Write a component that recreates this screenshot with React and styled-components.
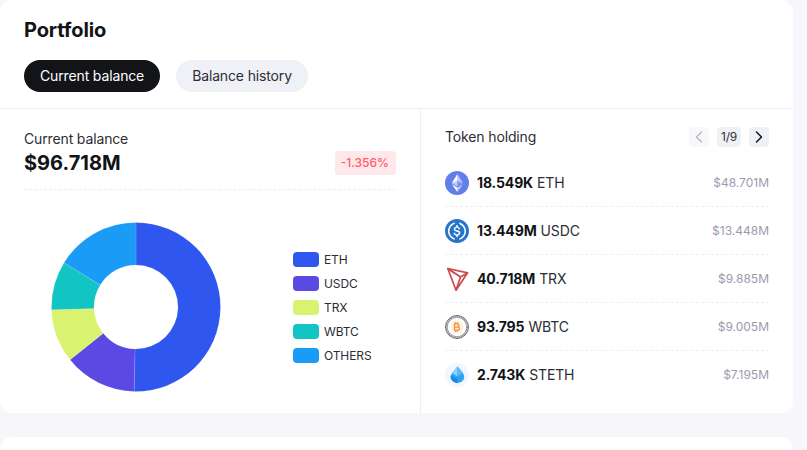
import React from "react";
import styled, { createGlobalStyle } from "styled-components";
import { ChevronLeft, ChevronRight } from "lucide-react";
import { FaBitcoinSign } from "react-icons/fa6";

const Global = createGlobalStyle`
  html, body { margin: 0; padding: 0; height: 450px; overflow: hidden; background: #f6f6fb; }
  body { font-family: Inter, "Liberation Sans", sans-serif; color: #121417; }
  * { box-sizing: border-box; }
`;

const Page = styled.div`
  width: 793px;
  display: flex;
  flex-direction: column;
  gap: 24px;
`;
const Card = styled.section`
  background: #fff;
  border-radius: 12px;
`;
const NextCard = styled(Card)`
  height: 13px;
  border-radius: 12px 12px 0 0;
`;
const Header = styled.header`
  height: 109px;
  padding: 18px 24px 0;
  border-bottom: 1px solid #eeeef1;
`;
const Title = styled.h1`
  margin: 0 0 17px;
  font-size: 20px;
  line-height: 25px;
  font-weight: 700;
  letter-spacing: -0.1px;
`;
const Tabs = styled.div`
  display: flex;
  gap: 16px;
`;
const Tab = styled.button`
  height: 32px;
  padding: 0 16px;
  border: 0;
  border-radius: 16px;
  font: 400 14px/32px Inter, sans-serif;
  letter-spacing: -0.14px;
  background: ${(p) => (p.$active ? "#121417" : "#f0f1f7")};
  color: ${(p) => (p.$active ? "#fff" : "#2b2e35")};
`;
const Columns = styled.div`
  display: grid;
  grid-template-columns: 421px 372px;
  height: 304px;
`;
const Left = styled.div`
  border-right: 1px solid #eeeef1;
  padding: 21px 24px 0;
`;
const Summary = styled.div`
  display: flex;
  justify-content: space-between;
  align-items: flex-end;
  height: 60px;
  padding-bottom: 14px;
  border-bottom: 1px dashed #eeeef1;
`;
const Label = styled.div`
  font-size: 14px;
  line-height: 18px;
  letter-spacing: -0.14px;
  color: #2b2e35;
`;
const Total = styled.div`
  font-size: 20px;
  line-height: 24px;
  font-weight: 700;
  margin-top: 3px;
`;
const Badge = styled.span`
  height: 24px;
  padding: 0 7px 0 6px;
  border-radius: 4px;
  background: #ffe8ea;
  color: #ff5c68;
  font-size: 12px;
  font-weight: 500;
  line-height: 24px;
`;
const ChartRow = styled.div`
  display: flex;
  align-items: center;
  padding: 32px 0 0 26.6px;
`;
const Legend = styled.ul`
  list-style: none;
  margin: 0 0 0 72.4px;
  padding: 0;
  display: flex;
  flex-direction: column;
  gap: 8px;
`;
const LegendItem = styled.li`
  display: flex;
  align-items: center;
  gap: 5px;
  height: 16px;
  font-size: 12px;
  letter-spacing: -0.1px;
  color: #2b2e35;
`;
const Swatch = styled.i`
  width: 26px;
  height: 15px;
  border-radius: 4px;
  background: ${(p) => p.$color};
`;
const Right = styled.div`
  padding: 18px 24px 0;
`;
const HoldingHead = styled.div`
  display: flex;
  align-items: center;
  justify-content: space-between;
  height: 20px;
  margin-bottom: 12px;
`;
const Pager = styled.div`
  display: flex;
  gap: 8px;
  align-items: center;
`;
const PageButton = styled.span`
  width: 20px;
  height: 20px;
  border-radius: 4px;
  display: flex;
  align-items: center;
  justify-content: center;
  background: ${(p) => (p.$disabled ? "#f8f8fa" : "#f0f1f7")};
  color: ${(p) => (p.$disabled ? "#b4b6bb" : "#121417")};
`;
const PageCount = styled.span`
  width: 24px;
  height: 20px;
  border-radius: 4px;
  background: #f0f1f7;
  font-size: 12px;
  line-height: 20px;
  letter-spacing: -0.2px;
  text-align: center;
  color: #2b2e35;
`;
const Row = styled.div`
  display: flex;
  align-items: center;
  height: 48px;
  border-bottom: 1px dashed ${(p) => (p.$last ? "transparent" : "#eeeef1")};
`;
const TokenIcon = styled.span`
  width: 24px;
  height: 24px;
  flex: none;
  margin-right: 8px;
  display: flex;
  svg { display: block; }
`;
const Amount = styled.span`
  font-size: 14px;
  font-weight: 700;
  letter-spacing: -0.14px;
`;
const Symbol = styled.span`
  font-size: 14px;
  letter-spacing: -0.14px;
  color: #2b2e35;
  margin-left: 4px;
`;
const Value = styled.span`
  margin-left: auto;
  font-size: 12px;
  color: #9d9aaf;
`;

const Eth = () => (
  <svg width="24" height="24" viewBox="0 0 32 32">
    <circle cx="16" cy="16" r="16" fill="#627EEA" />
    <g fill="#fff">
      <path fillOpacity=".602" d="M16.498 4v8.87l7.497 3.35z" />
      <path d="M16.498 4L9 16.22l7.498-3.35z" />
      <path fillOpacity=".602" d="M16.498 21.968v6.027L24 17.616z" />
      <path d="M16.498 27.995v-6.028L9 17.616z" />
      <path fillOpacity=".2" d="M16.498 20.573l7.497-4.353-7.497-3.348z" />
      <path fillOpacity=".602" d="M9 16.22l7.498 4.353v-7.701z" />
    </g>
  </svg>
);
const Usdc = () => (
  <svg width="24" height="24" viewBox="0 0 2000 2000">
    <path d="M1000 2000c554.17 0 1000-445.83 1000-1000S1554.17 0 1000 0 0 445.83 0 1000s445.83 1000 1000 1000z" fill="#2775ca" />
    <path d="M1275 1158.33c0-145.83-87.5-195.83-262.5-216.66-125-16.67-150-50-150-108.34s41.67-95.83 125-95.83c75 0 116.67 25 137.5 87.5 4.17 12.5 16.67 20.83 29.17 20.83h66.66c16.67 0 29.17-12.5 29.17-29.16v-4.17c-16.67-91.67-91.67-162.5-187.5-170.83v-100c0-16.67-12.5-29.17-33.33-33.34h-62.5c-16.67 0-29.17 12.5-33.34 33.34v95.83c-125 16.67-204.16 100-204.16 204.17 0 137.5 83.33 191.66 258.33 212.5 116.67 20.83 154.17 45.83 154.17 112.5s-58.34 112.5-137.5 112.5c-108.34 0-145.84-45.84-158.34-108.34-4.16-16.66-16.66-25-29.16-25h-70.84c-16.66 0-29.16 12.5-29.16 29.17v4.17c16.66 104.16 83.33 179.16 220.83 200v100c0 16.66 12.5 29.16 33.33 33.33h62.5c16.67 0 29.17-12.5 33.34-33.33v-100c125-20.84 208.33-108.34 208.33-220.84z" fill="#fff" />
    <path d="M787.5 1595.83c-325-116.66-491.67-479.16-370.83-800 62.5-175 200-308.33 370.83-370.83 16.67-8.33 25-20.83 25-41.67V325c0-16.67-8.33-29.17-25-33.33-4.17 0-12.5 0-16.67 4.16-395.83 125-612.5 545.84-487.5 941.67 75 233.33 254.17 412.5 487.5 487.5 16.67 8.33 33.34 0 37.5-16.67 4.17-4.16 4.17-8.33 4.17-16.66v-58.34c0-12.5-12.5-29.16-25-37.5zM1229.17 295.83c-16.67-8.33-33.34 0-37.5 16.67-4.17 4.17-4.17 8.33-4.17 16.67v58.33c0 16.67 12.5 33.33 25 41.67 325 116.66 491.67 479.16 370.83 800-62.5 175-200 308.33-370.83 370.83-16.67 8.33-25 20.83-25 41.67V1700c0 16.67 8.33 29.17 25 33.33 4.17 0 12.5 0 16.67-4.16 395.83-125 612.5-545.84 487.5-941.67-75-237.5-258.34-416.67-487.5-491.67z" fill="#fff" />
  </svg>
);
const Trx = () => (
  <svg width="24" height="24" viewBox="0 0 24 24" fill="none" stroke="#cc4a4a" strokeWidth="1.7" strokeLinejoin="round">
    <path d="M2.8 1.5 L22.6 5.8 L11 23.2 Z" />
    <path d="M2.8 1.5 L15.5 10 L22.6 5.8 M15.5 10 L11 23.2" />
    <path d="M2.8 1.5 L9 6.5" strokeWidth="1" />
  </svg>
);
const Wbtc = () => (
  <svg width="24" height="24" viewBox="0 0 24 24">
    <circle cx="12" cy="12" r="11.5" fill="#fff" stroke="#5a5564" strokeWidth=".9" />
    <circle cx="12" cy="12" r="10" fill="none" stroke="#8f8b99" strokeWidth="1.8" strokeDasharray="1.6 0.5" />
    <circle cx="12" cy="12" r="6.6" fill="#fdf1e0" />
    <FaBitcoinSign x="7" y="7" size="10" color="#f09242" />
  </svg>
);
const Steth = () => (
  <svg width="24" height="24" viewBox="0 0 24 24">
    <circle cx="12" cy="12" r="12" fill="#f1f7fc" />
    <path d="M12.5 3.6 L18 10 Q21 15.5 16.5 18.8 Q12.5 21 8.5 18.8 Q4 15.5 7 10 Z" fill="#2aa3f5" />
    <path d="M12.5 3.6 L7 10 L12.5 13.5 Z" fill="#8fd2fb" />
    <path d="M12.5 13.5 L18 10 L12.5 3.6 Z" fill="#56bcf9" />
    <path d="M5.6 12.5 L12.5 16.6 L12.5 20.2 Q10.3 20.2 8.5 18.8 Q5 16 5.6 12.5 Z" fill="#1b88e6" />
  </svg>
);

const SLICES = [
  { label: "ETH", color: "#2f57ef", share: 50.35 },
  { label: "USDC", color: "#5b49e3", share: 13.9 },
  { label: "TRX", color: "#d9f371", share: 10.22 },
  { label: "WBTC", color: "#13c4c4", share: 9.31 },
  { label: "OTHERS", color: "#1a9bf5", share: 16.22 },
];

const TOKENS = [
  { amount: "18.549K", symbol: "ETH", value: "$48.701M", Icon: Eth },
  { amount: "13.449M", symbol: "USDC", value: "$13.448M", Icon: Usdc },
  { amount: "40.718M", symbol: "TRX", value: "$9.885M", Icon: Trx },
  { amount: "93.795", symbol: "WBTC", value: "$9.005M", Icon: Wbtc },
  { amount: "2.743K", symbol: "STETH", value: "$7.195M", Icon: Steth },
];

function arc(start, end, R, r, c) {
  const pt = (rad, pct) => {
    const a = (pct / 100) * 2 * Math.PI;
    return `${(c + rad * Math.sin(a)).toFixed(3)} ${(c - rad * Math.cos(a)).toFixed(3)}`;
  };
  const large = end - start > 50 ? 1 : 0;
  return `M${pt(R, start)} A${R} ${R} 0 ${large} 1 ${pt(R, end)} L${pt(r, end)} A${r} ${r} 0 ${large} 0 ${pt(r, start)} Z`;
}

const Donut = () => {
  let at = 0;
  return (
    <svg width="170" height="170" viewBox="0 0 170 170">
      {SLICES.map((s) => {
        const d = arc(at, at + s.share, 84.5, 42, 85);
        at += s.share;
        return <path key={s.label} d={d} fill={s.color} stroke="#fff" strokeOpacity=".4" strokeWidth=".3" />;
      })}
    </svg>
  );
};

export default function App() {
  return (
    <Page>
      <Global />
      <Card>
        <Header>
          <Title>Portfolio</Title>
          <Tabs>
            <Tab $active>Current balance</Tab>
            <Tab>Balance history</Tab>
          </Tabs>
        </Header>
        <Columns>
          <Left>
            <Summary>
              <div>
                <Label>Current balance</Label>
                <Total>$96.718M</Total>
              </div>
              <Badge>-1.356%</Badge>
            </Summary>
            <ChartRow>
              <Donut />
              <Legend>
                {SLICES.map((s) => (
                  <LegendItem key={s.label}>
                    <Swatch $color={s.color} />
                    {s.label}
                  </LegendItem>
                ))}
              </Legend>
            </ChartRow>
          </Left>
          <Right>
            <HoldingHead>
              <Label>Token holding</Label>
              <Pager>
                <PageButton $disabled><ChevronLeft size={20} strokeWidth={1.5} /></PageButton>
                <PageCount>1/9</PageCount>
                <PageButton><ChevronRight size={20} strokeWidth={1.75} /></PageButton>
              </Pager>
            </HoldingHead>
            {TOKENS.map(({ amount, symbol, value, Icon }, i) => (
              <Row key={symbol} $last={i === TOKENS.length - 1}>
                <TokenIcon><Icon /></TokenIcon>
                <Amount>{amount}</Amount>
                <Symbol>{symbol}</Symbol>
                <Value>{value}</Value>
              </Row>
            ))}
          </Right>
        </Columns>
      </Card>
      <NextCard />
    </Page>
  );
}
